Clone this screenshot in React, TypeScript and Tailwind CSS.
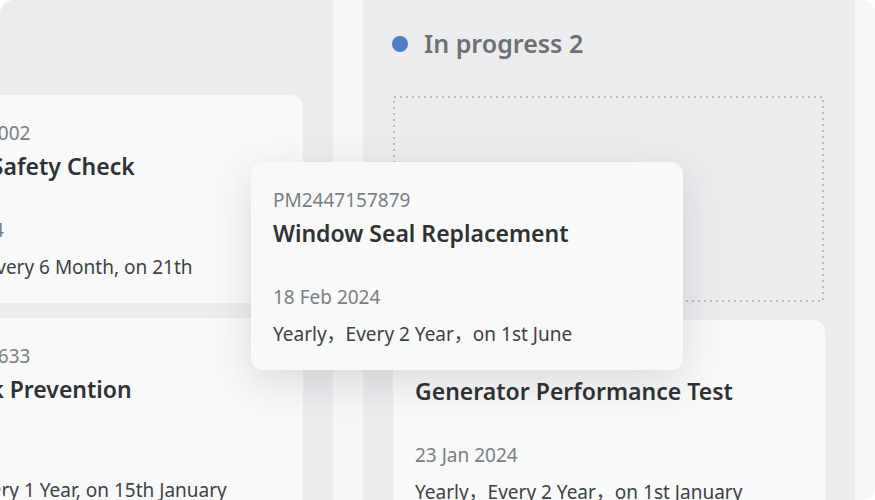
import React from "react";

type Task = {
  id: string;
  title: string;
  date: string;
  repeat: string;
};

const todo: Task[] = [
  {
    id: "PM2447150002",
    title: "Elevator Safety Check",
    date: "12 Mar 2024",
    repeat: "Monthly，Every 6 Month, on 21th",
  },
  {
    id: "PM2447153633",
    title: "Roof Leak Prevention",
    date: "15 Jan 2024",
    repeat: "Yearly， Every 1 Year, on 15th January",
  },
];

const inProgress: Task[] = [
  {
    id: "PM2447152210",
    title: "Generator Performance Test",
    date: "23 Jan 2024",
    repeat: "Yearly，Every 2 Year，on 1st January",
  },
];

const dragged: Task = {
  id: "PM2447157879",
  title: "Window Seal Replacement",
  date: "18 Feb 2024",
  repeat: "Yearly，Every 2 Year，on 1st June",
};

function TaskCard({ task, className = "" }: { task: Task; className?: string }) {
  return (
    <div
      className={`flex h-[208px] w-[432px] shrink-0 flex-col rounded-[12px] bg-[#f8f9f9] px-[22px] pt-[26px] ${className}`}
    >
      <div className="h-[24px] text-[19px] leading-[24px] text-[#7b7e83]">{task.id}</div>
      <div className="mt-[5px] h-[32px] whitespace-nowrap text-[23px] font-semibold leading-[32px] text-[#2f3134]">
        {task.title}
      </div>
      <div className="mt-[36px] h-[24px] whitespace-nowrap text-[19px] leading-[24px] text-[#7b7e83]">
        {task.date}
      </div>
      <div className="mt-[12px] h-[26px] whitespace-pre text-[19px] leading-[26px] text-[#3e4145]">
        {task.repeat}
      </div>
    </div>
  );
}

function ColumnHeader({ label, count, dot }: { label: string; count: number; dot: string }) {
  return (
    <div className="flex h-[32px] items-center gap-[16px] pl-[29px]">
      <span className={`h-[16px] w-[16px] shrink-0 rounded-full ${dot}`} />
      <span className="whitespace-nowrap text-[25px] font-semibold text-[#6d7075]">
        {label} {count}
      </span>
    </div>
  );
}

export default function App() {
  return (
    <div
      className="relative h-[500px] w-[875px] overflow-hidden rounded-[14px] bg-[#f5f6f7]"
      style={{ fontFamily: '"Noto Sans", "Noto Sans CJK SC", sans-serif' }}
    >
      <div className="-mt-[20px] ml-[-159px] flex h-[540px] gap-[30px]">
        {/* To do */}
        <div className="flex h-[580px] w-[492px] shrink-0 flex-col rounded-[12px] bg-[#ebecee] pt-[48px]">
          <ColumnHeader label="To do" count={2} dot="bg-[#9ca3af]" />
          <div className="mt-[35px] flex flex-col gap-[15px] px-[30px]">
            {todo.map((t) => (
              <TaskCard key={t.id} task={t} />
            ))}
          </div>
        </div>

        {/* In progress */}
        <div className="flex h-[580px] w-[492px] shrink-0 flex-col rounded-[12px] bg-[#ebecee] pt-[48px]">
          <ColumnHeader label="In progress" count={2} dot="bg-[#4f7fc6]" />
          <div className="mt-[36px] flex flex-col gap-[18px] px-[30px]">
            <div className="relative h-[206px] w-[431px]">
              <svg className="absolute inset-0" width="431" height="206">
                <rect
                  x="1"
                  y="1"
                  width="429"
                  height="204"
                  fill="none"
                  stroke="#b9bcc1"
                  strokeWidth="2"
                  strokeDasharray="2 4"
                />
              </svg>
            </div>
            {inProgress.map((t) => (
              <TaskCard key={t.id} task={t} />
            ))}
          </div>
        </div>

        {/* Done */}
        <div className="h-[580px] w-[492px] shrink-0 rounded-[12px] bg-[#f9fafa]" />
      </div>

      {/* card being dragged */}
      <div className="absolute left-[251px] top-[162px]">
        <TaskCard task={dragged} className="shadow-[0_12px_40px_rgba(60,64,70,0.16)]" />
      </div>
    </div>
  );
}
